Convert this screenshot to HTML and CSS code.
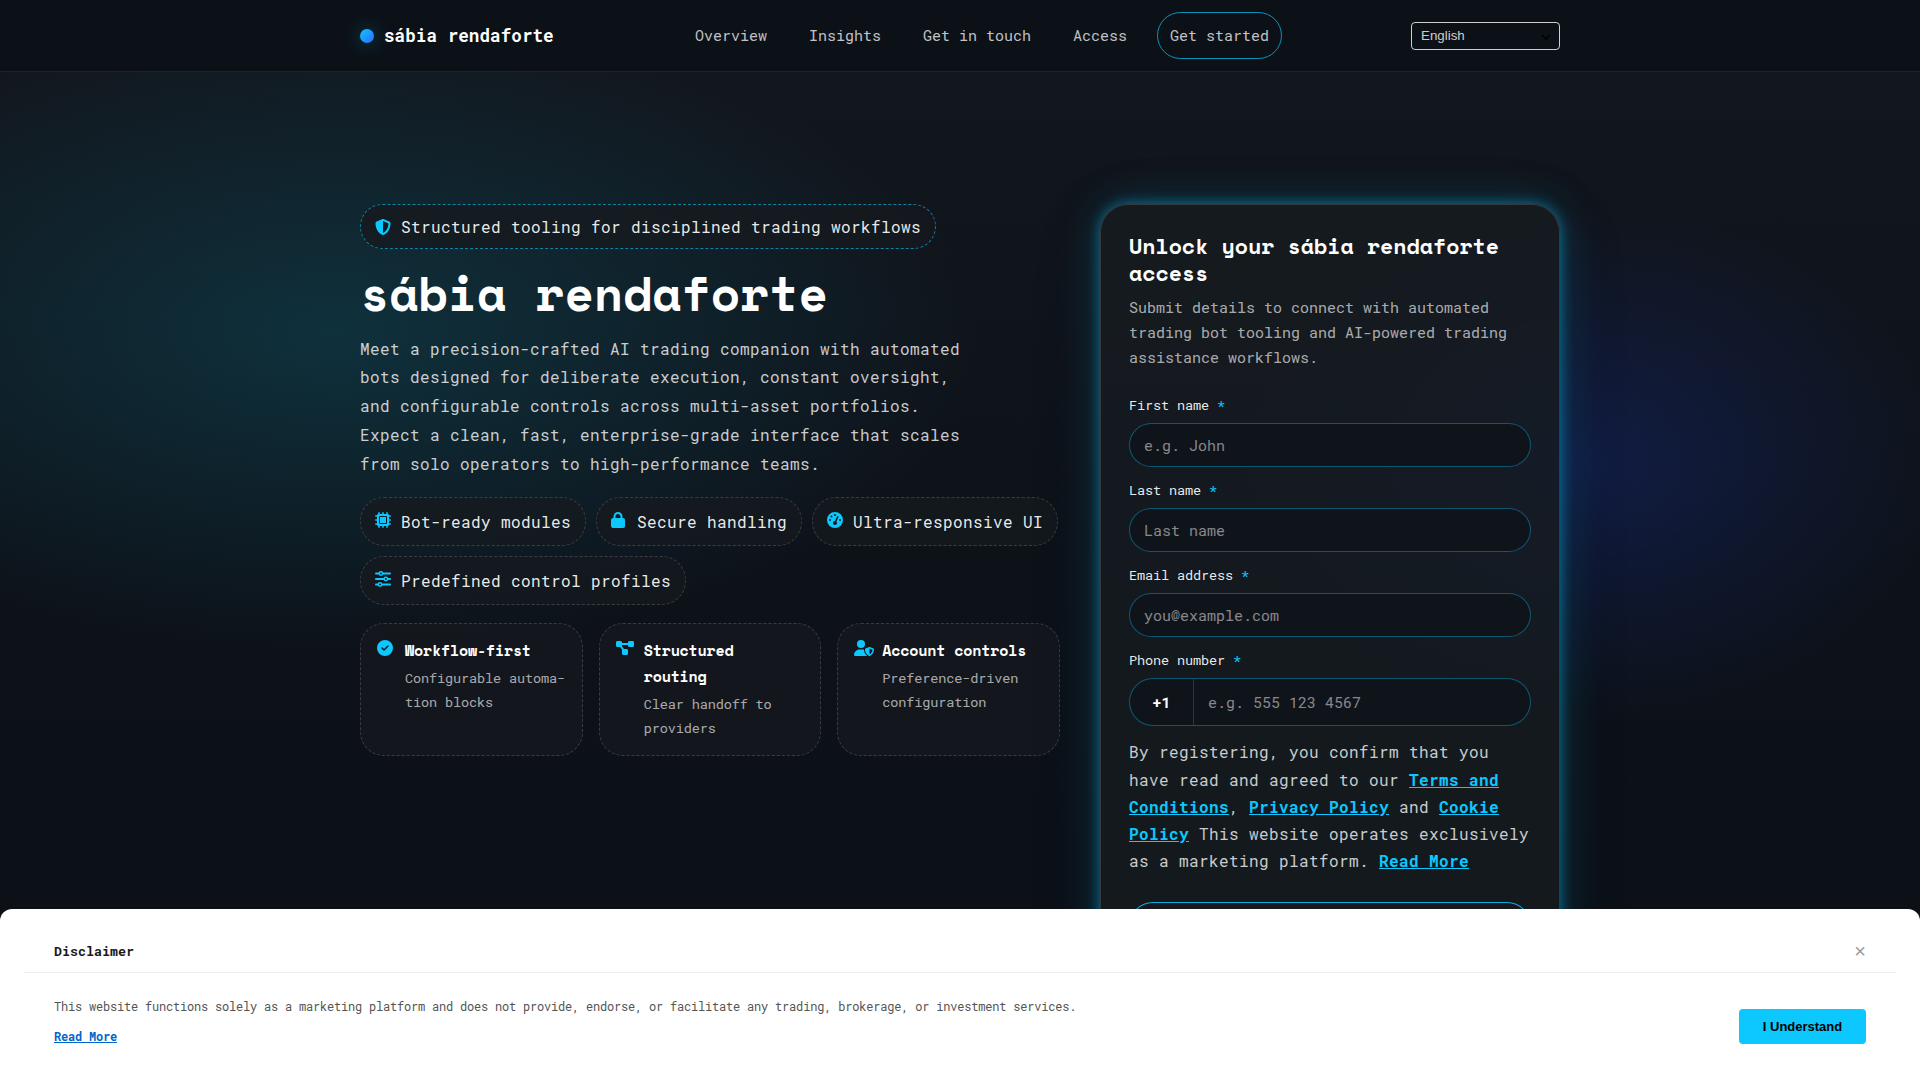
FILE: index.html
```
<!DOCTYPE html>
<html lang="en">
<head>
    <meta charset="UTF-8">
    <meta name="viewport" content="width=device-width, initial-scale=1.0">
    <title>sábia rendaforte</title>
    <link rel="stylesheet" href="styles.css">
</head>
<body>

    <header class="site-header">
        <div class="container header-inner">
            <a class="brand" href="#"><span class="brand-dot"></span>sábia rendaforte</a>
            <nav class="nav">
                <a href="#">Overview</a>
                <a href="#">Insights</a>
                <a href="#">Get in touch</a>
                <a href="#">Access</a>
                <a href="#" class="nav-cta">Get started</a>
            </nav>
            <div class="lang">
                <span>English</span>
                <svg width="10" height="6" viewBox="0 0 10 6"><path d="M1 1l4 4 4-4" fill="none" stroke="#000" stroke-width="1.6"/></svg>
            </div>
        </div>
    </header>

    <main class="hero">
        <div class="container hero-grid">
            <section class="intro">
                <div class="badge">
                    <svg class="icon" viewBox="0 0 512 512"><path d="M256 0c4.600 0 9.200 1 13.400 2.900L457.700 82.800c22 9.300 38.400 31 38.300 57.200-.5 99.200-41.300 280.700-213.600 363.200-16.700 8-36.100 8-52.800 0C57.300 420.700 16.500 239.200 16 140c-.1-26.200 16.300-47.900 38.300-57.200L242.700 2.900C246.800 1 251.400 0 256 0zm0 66.800v378.100c138-66.800 175.100-214.800 176-303.400L256 66.800z"/></svg>
                    <span>Structured tooling for disciplined trading workflows</span>
                </div>
                <h1>sábia rendaforte</h1>
                <p class="lead">Meet a precision-crafted AI trading companion with automated bots designed for deliberate execution, constant oversight, and configurable controls across multi-asset portfolios. Expect a clean, fast, enterprise-grade interface that scales from solo operators to high-performance teams.</p>

                <div class="chips">
                    <div class="chip">
                        <svg class="icon" viewBox="0 0 512 512"><path fill-rule="evenodd" d="M176 24v40h-24V24a24 24 0 0 0-48 0v40a40 40 0 0 0-40 40H24a24 24 0 0 0 0 48h40v80H24a24 24 0 0 0 0 48h40v80H24a24 24 0 0 0 0 48h40a40 40 0 0 0 40 40v40a24 24 0 0 0 48 0v-40h80v40a24 24 0 0 0 48 0v-40h80v40a24 24 0 0 0 48 0v-40a40 40 0 0 0 40-40h40a24 24 0 0 0 0-48h-40v-80h40a24 24 0 0 0 0-48h-40v-80h40a24 24 0 0 0 0-48h-40a40 40 0 0 0-40-40V24a24 24 0 0 0-48 0v40h-80V24a24 24 0 0 0-48 0v40h-56zM160 128h192a32 32 0 0 1 32 32v192a32 32 0 0 1-32 32H160a32 32 0 0 1-32-32V160a32 32 0 0 1 32-32zm0 32v192h192V160z"/></svg>
                        <span>Bot-ready modules</span>
                    </div>
                    <div class="chip">
                        <svg class="icon" viewBox="0 0 512 512"><path fill-rule="evenodd" d="M144 144v48h160v-48a80 80 0 0 0-160 0zM80 192v-48a144 144 0 0 1 288 0v48h16a64 64 0 0 1 64 64v192a64 64 0 0 1-64 64H64a64 64 0 0 1-64-64V256a64 64 0 0 1 64-64z"/></svg>
                        <span>Secure handling</span>
                    </div>
                    <div class="chip">
                        <svg class="icon" viewBox="0 0 512 512"><path fill-rule="evenodd" d="M0 256a256 256 0 1 1 512 0A256 256 0 1 1 0 256zM288 96a32 32 0 1 0-64 0 32 32 0 1 0 64 0zM256 416c35.300 0 64-28.700 64-64 0-17.400-6.900-33.100-18.100-44.600L366 161.700c5.300-12.100-.2-26.300-12.300-31.600s-26.300.2-31.600 12.300L257.900 288H256c-35.300 0-64 28.700-64 64s28.700 64 64 64zM176 144a32 32 0 1 0-64 0 32 32 0 1 0 64 0zM96 288a32 32 0 1 0 0-64 32 32 0 1 0 0 64zm352-32a32 32 0 1 0-64 0 32 32 0 1 0 64 0z"/></svg>
                        <span>Ultra-responsive UI</span>
                    </div>
                    <div class="chip">
                        <svg class="icon" viewBox="0 0 512 512"><g fill="none" stroke="#0cc8ff" stroke-width="60" stroke-linecap="round"><path d="M30 80h100M250 80h232M30 256h250M410 256h72M30 432h70M220 432h262"/><g stroke-width="46"><circle cx="190" cy="80" r="55"/><circle cx="346" cy="256" r="55"/><circle cx="160" cy="432" r="55"/></g></g></svg>
                        <span>Predefined control profiles</span>
                    </div>
                </div>

                <div class="features">
                    <div class="feature">
                        <svg class="icon" viewBox="0 0 512 512"><path fill-rule="evenodd" d="M256 512a256 256 0 1 0 0-512 256 256 0 1 0 0 512zm113-303L241 337c-9.400 9.400-24.600 9.400-33.900 0l-64-64c-9.400-9.400-9.400-24.600 0-33.900s24.600-9.400 33.900 0l47 47L335 175c9.400-9.400 24.600-9.400 33.900 0s9.400 24.600 0 33.900z"/></svg>
                        <div class="feature-text">
                            <strong>Workflow-first</strong>
                            <p>Configurable automa-<br>tion blocks</p>
                        </div>
                    </div>
                    <div class="feature">
                        <svg class="icon icon-diagram" viewBox="0 0 576 512"><path d="M0 80c0-26.500 21.500-48 48-48h96c26.500 0 48 21.500 48 48v16h192V80c0-26.500 21.500-48 48-48h96c26.500 0 48 21.500 48 48v96c0 26.500-21.500 48-48 48h-96c-26.500 0-48-21.500-48-48v-16H192v16c0 7.300-1.700 14.300-4.600 20.500l68.600 91.500h80c26.500 0 48 21.500 48 48v96c0 26.500-21.500 48-48 48h-96c-26.500 0-48-21.500-48-48v-96c0-7.300 1.700-14.300 4.600-20.500L128 224H48c-26.500 0-48-21.500-48-48V80z"/></svg>
                        <div class="feature-text">
                            <strong>Structured routing</strong>
                            <p>Clear handoff to providers</p>
                        </div>
                    </div>
                    <div class="feature">
                        <svg class="icon icon-user" viewBox="0 0 640 512"><path fill-rule="evenodd" d="M224 256a128 128 0 1 0 0-256 128 128 0 1 0 0 256zm-45.700 48C79.800 304 0 383.800 0 482.300 0 498.700 13.300 512 29.700 512h388.600c1.800 0 3.500-.2 5.300-.5-76.300-55.100-99.800-141-103.100-200.200-16.100-4.800-33.100-7.300-50.700-7.300zm308.800-78.300l-120 48C358 277.400 352 286.200 352 296c0 63.300 25.900 168.800 134.800 214.200 5.900 2.500 12.600 2.500 18.500 0C614.100 464.800 640 359.300 640 296c0-9.800-6-18.600-15.100-22.300l-120-48c-5.700-2.300-12.100-2.300-17.800 0zM591.400 312c-3.900 50.700-27.200 116.700-95.400 149.700V273.800L591.400 312z"/></svg>
                        <div class="feature-text">
                            <strong>Account controls</strong>
                            <p>Preference-driven configuration</p>
                        </div>
                    </div>
                </div>
            </section>

            <form class="signup">
                <h2>Unlock your sábia rendaforte access</h2>
                <p class="signup-sub">Submit details to connect with automated trading bot tooling and AI-powered trading assistance workflows.</p>

                <label for="first">First name <span>*</span></label>
                <input type="text" id="first" placeholder="e.g. John">

                <label for="last">Last name <span>*</span></label>
                <input type="text" id="last" placeholder="Last name">

                <label for="email">Email address <span>*</span></label>
                <input type="email" id="email" placeholder="you@example.com">

                <label for="phone">Phone number <span>*</span></label>
                <div class="phone">
                    <span class="prefix">+1</span>
                    <input type="tel" id="phone" placeholder="e.g. 555 123 4567">
                </div>

                <p class="consent">By registering, you confirm that you have read and agreed to our <a href="#">Terms and Conditions</a>, <a href="#">Privacy Policy</a> and <a href="#">Cookie Policy</a> This website operates exclusively as a marketing platform. <a href="#">Read More</a></p>

                <button type="submit" class="submit" aria-label="Submit"></button>
            </form>
        </div>
    </main>

    <div class="disclaimer">
        <div class="disclaimer-head">
            <h3>Disclaimer</h3>
            <button class="close" aria-label="Close">×</button>
        </div>
        <div class="disclaimer-body">
            <div>
                <p>This website functions solely as a marketing platform and does not provide, endorse, or facilitate any trading, brokerage, or investment services.</p>
                <a href="#">Read More</a>
            </div>
            <button class="accept">I Understand</button>
        </div>
    </div>

</body>
</html>
```
FILE: styles.css
```
* {
    box-sizing: border-box;
}
body {
    margin: 0;
    height: 1080px;
    overflow: hidden;
    font-family: "Roboto Mono", "DejaVu Sans Mono", monospace;
    font-size: 16px;
    line-height: 1.7;
    color: rgba(255, 255, 255, 0.92);
    background-color: #0c1118;
}
h1, h2, h3, p {
    margin: 0;
}
h1, h2, strong {
    font-family: "Space Mono", "DejaVu Sans Mono", monospace;
    font-weight: 700;
    color: #fff;
}
.container {
    width: 1200px;
    margin: 0 auto;
}
.icon {
    width: 16px;
    height: 16px;
    flex: none;
    fill: #0cc8ff;
}

/* header */
.site-header {
    height: 72px;
    background: #0c1118;
    border-bottom: 1px solid rgba(255, 255, 255, 0.08);
}
.header-inner {
    height: 71px;
    display: flex;
    align-items: center;
    justify-content: space-between;
}
.brand {
    width: 323px;
    display: flex;
    align-items: center;
    gap: 10px;
    color: #fff;
    font-size: 17.6px;
    font-weight: 700;
    letter-spacing: 0.05px;
    text-decoration: none;
}
.brand-dot {
    width: 14px;
    height: 14px;
    border-radius: 50%;
    background: linear-gradient(135deg, #0cc8ff, #2b6cff);
    box-shadow: 0 0 18px rgba(12, 200, 255, 0.35);
}
.nav {
    display: flex;
    align-items: center;
    gap: 18px;
}
.nav a {
    padding: 10px 12px;
    font-size: 15px;
    color: rgba(255, 255, 255, 0.75);
    text-decoration: none;
    white-space: nowrap;
}
.nav .nav-cta {
    border: 1px solid rgba(12, 200, 255, 0.7);
    border-radius: 24px;
}
.lang {
    width: 149px;
    height: 28px;
    margin-left: auto;
    padding: 2px 8px 0 9px;
    display: flex;
    align-items: center;
    justify-content: space-between;
    border: 1px solid rgba(255, 255, 255, 0.8);
    border-radius: 4px;
    font-family: "Liberation Sans", Arial, sans-serif;
    font-size: 13.33px;
    color: rgba(255, 255, 255, 0.8);
}

/* hero */
.hero {
    height: 1008px;
    padding-top: 132px;
    background:
        radial-gradient(650px 320px at 335px 262px, rgba(12, 200, 235, 0.16), transparent),
        radial-gradient(360px 260px at 1590px 392px, rgba(30, 70, 255, 0.18), transparent),
        linear-gradient(180deg, #12161d 0, #0d1219 500px, #0c1118 800px);
}
.hero-grid {
    display: grid;
    grid-template-columns: 700px 460px;
    gap: 40px;
    align-items: start;
}
.badge,
.chip {
    display: inline-flex;
    align-items: center;
    gap: 10px;
    border: 1px dashed rgba(255, 255, 255, 0.16);
    border-radius: 24px;
    background: rgba(22, 25, 31, 0.78);
    letter-spacing: 0.4px;
    white-space: nowrap;
}
.badge {
    padding: 8px 14px;
    border-color: rgba(12, 200, 255, 0.6);
}
h1 {
    margin-top: 15px;
    font-size: 48px;
    line-height: 58px;
    letter-spacing: -0.15px;
}
.lead {
    margin-top: 12.4px;
    width: 620px;
    line-height: 1.8;
    letter-spacing: 0.4px;
    color: rgba(255, 255, 255, 0.78);
}
.chips {
    margin-top: 18.4px;
    display: flex;
    flex-wrap: wrap;
    gap: 10px;
}
.chip {
    height: 49px;
    padding: 10px 14px;
}
.chip .icon {
    margin-bottom: 2px;
}
.features {
    margin-top: 17.6px;
    display: grid;
    grid-template-columns: repeat(3, 1fr);
    gap: 16px;
}
.feature {
    height: 133px;
    padding: 14px 16px;
    display: flex;
    gap: 12px;
    border: 1px dashed rgba(255, 255, 255, 0.16);
    border-radius: 24px;
    background: rgba(22, 25, 31, 0.75);
}
.feature .icon {
    margin-top: 2px;
}
.feature .icon-diagram {
    width: 18px;
    margin-right: -2px;
}
.feature .icon-user {
    width: 20px;
    margin-right: -4px;
}
.feature-text {
    margin-top: -1px;
}
.feature strong {
    display: block;
    font-size: 15px;
    line-height: 26px;
    letter-spacing: -0.19px;
}
.feature p {
    margin-top: 3px;
    font-size: 13.6px;
    line-height: 24px;
    letter-spacing: -0.16px;
    color: rgba(255, 255, 255, 0.65);
}

/* signup form */
.signup {
    height: 800px;
    padding: 28px;
    border: 1px solid rgba(255, 255, 255, 0.14);
    border-radius: 28px;
    background: rgba(23, 27, 32, 0.8);
    box-shadow:
        0 0 14px rgba(12, 200, 255, 0.5),
        0 0 48px rgba(12, 200, 255, 0.2),
        0 18px 70px rgba(0, 0, 0, 0.15);
}
.signup h2 {
    font-size: 21.6px;
    line-height: 27px;
}
.signup-sub {
    margin: 8px 0 24px;
    font-size: 15px;
    line-height: 25px;
    color: rgba(255, 255, 255, 0.65);
}
.signup label {
    display: block;
    margin-bottom: 6px;
    font-size: 13.6px;
    line-height: 23px;
    letter-spacing: -0.16px;
}
.signup label span {
    color: #0cc8ff;
}
.signup input {
    display: block;
    width: 100%;
    height: 44px;
    margin-bottom: 12px;
    padding: 0 14px;
    border: 1px solid rgba(12, 200, 255, 0.38);
    border-radius: 22px;
    background: #0f131a;
    color: #fff;
    font-family: inherit;
    font-size: 15px;
}
.signup input::placeholder {
    color: rgba(255, 255, 255, 0.5);
}
.phone {
    height: 48px;
    display: flex;
    border: 1px solid rgba(12, 200, 255, 0.38);
    border-radius: 24px;
    background: #0f131a;
    overflow: hidden;
}
.prefix {
    width: 64px;
    flex: none;
    border-right: 1px solid rgba(255, 255, 255, 0.14);
    color: #fff;
    font-size: 15px;
    font-weight: 700;
    line-height: 46px;
    text-align: center;
}
.phone input {
    height: 46px;
    border: 0;
    background: transparent;
}
.consent {
    margin-top: 12.3px;
    color: rgba(255, 255, 255, 0.78);
    line-height: 27.2px;
    letter-spacing: 0.4px;
}
.consent a {
    color: #0cc8ff;
    font-weight: 700;
}
.submit {
    display: block;
    width: 100%;
    height: 50px;
    margin-top: 27.7px;
    border: 1px solid rgba(12, 200, 255, 0.85);
    border-radius: 24px;
    background: #14181f;
}

/* bottom disclaimer */
.disclaimer {
    position: fixed;
    left: 0;
    right: 0;
    bottom: 0;
    height: 171px;
    padding: 24px 24px 0;
    border-radius: 12px 12px 0 0;
    background: #fff;
    color: #555;
}
.disclaimer-head {
    height: 40px;
    padding: 0 30px 2px 30px;
    display: flex;
    align-items: center;
    justify-content: space-between;
    border-bottom: 1px solid #eee;
}
.disclaimer-head h3 {
    font-size: 13.33px;
    color: #1a1a1a;
}
.close {
    padding: 0;
    border: 0;
    background: none;
    font: 20px "Liberation Sans", Arial, sans-serif;
    color: #999;
}
.disclaimer-body {
    padding: 23px 30px 0;
    display: flex;
    justify-content: space-between;
    align-items: flex-start;
    font-size: 12px;
    line-height: 20px;
    letter-spacing: -0.2px;
}
.disclaimer-body a {
    display: inline-block;
    margin-top: 10px;
    color: #0066cc;
    font-weight: 700;
}
.accept {
    width: 127px;
    height: 35px;
    margin-top: 13px;
    border: 0;
    border-radius: 4px;
    background: #0cc8ff;
    color: #000;
    font: bold 13px "Liberation Sans", Arial, sans-serif;
}
```
